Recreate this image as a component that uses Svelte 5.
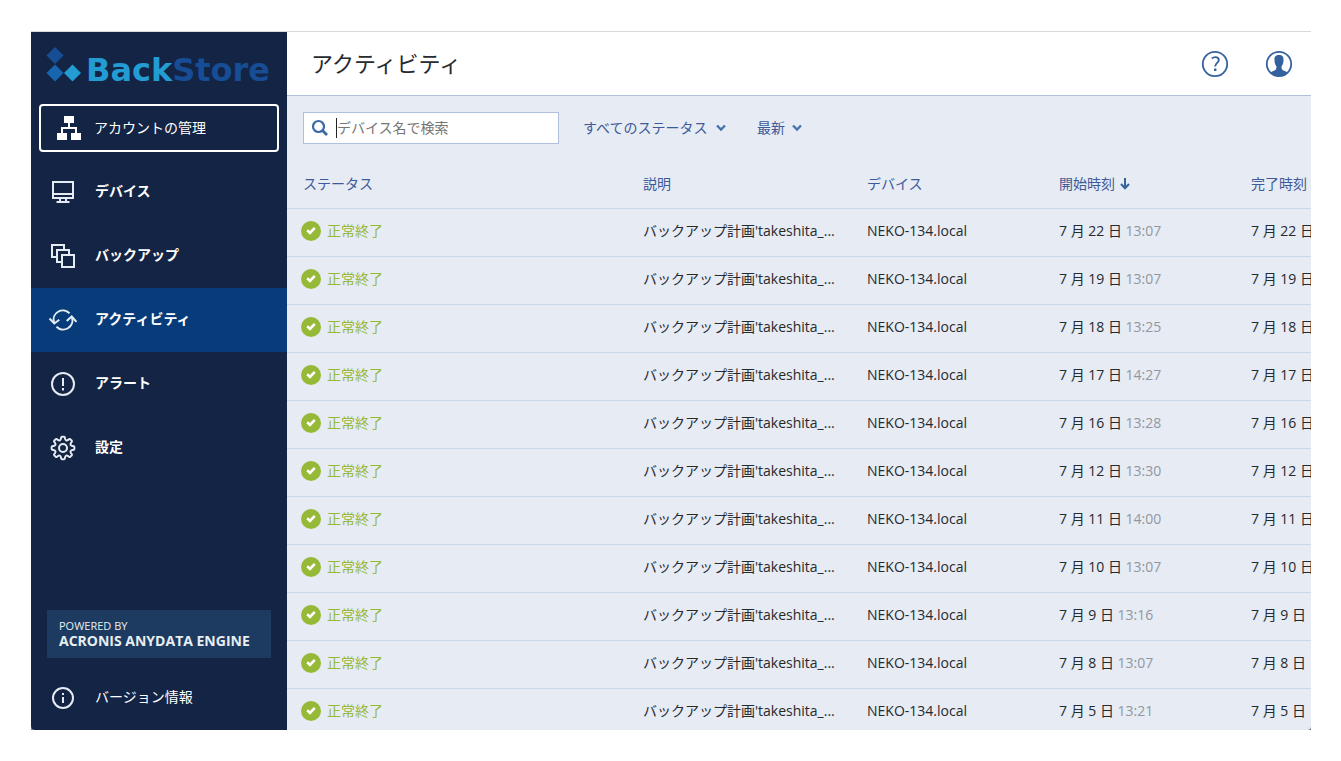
<script>
  const nav = [
    { id: 'devices', label: 'デバイス' },
    { id: 'backups', label: 'バックアップ' },
    { id: 'activity', label: 'アクティビティ', active: true },
    { id: 'alerts', label: 'アラート' },
    { id: 'settings', label: '設定' },
  ];

  const rows = [
    ['7 月 22 日', '13:07'],
    ['7 月 19 日', '13:07'],
    ['7 月 18 日', '13:25'],
    ['7 月 17 日', '14:27'],
    ['7 月 16 日', '13:28'],
    ['7 月 12 日', '13:30'],
    ['7 月 11 日', '14:00'],
    ['7 月 10 日', '13:07'],
    ['7 月 9 日', '13:16'],
    ['7 月 8 日', '13:07'],
    ['7 月 5 日', '13:21'],
  ].map(([day, time]) => ({
    status: '正常終了',
    description: "バックアップ計画'takeshita_...",
    device: 'NEKO-134.local',
    day,
    time,
  }));

  // Outline of the settings gear: eight rounded teeth around the hub.
  const gear = Array.from({ length: 8 }, (_, i) => {
    const at = (deg, r) => {
      const a = ((i * 45 + deg - 90) * Math.PI) / 180;
      return `${(16 + r * Math.cos(a)).toFixed(2)} ${(16 + r * Math.sin(a)).toFixed(2)}`;
    };
    return `${i ? 'L' : 'M'}${at(-12, 9.6)} Q${at(-11, 11.4)} ${at(-6, 11.4)} L${at(6, 11.4)} Q${at(11, 11.4)} ${at(12, 9.6)} Q${at(22.5, 7)} ${at(33, 9.6)}`;
  }).join(' ') + ' Z';
</script>

{#snippet chevron()}
  <svg class="chevron" width="10" height="8" viewBox="0 0 10 8" aria-hidden="true">
    <path d="M1 1.5 5 5.5 9 1.5" fill="none" stroke="#4673ac" stroke-width="2.4" />
  </svg>
{/snippet}

<div class="page">
  <div class="frame">
    <div class="app">
      <aside class="sidebar">
        <a class="logo" href="#home">
          <svg width="36" height="36" viewBox="0 -1 36 36" aria-hidden="true">
            <path d="M9 0 17.5 8.5 9 17 .5 8.5Z" fill="#164d94" />
            <path d="M9 17.5 17.5 26 9 34.5.5 26Z" fill="#1665ae" />
            <path d="M26.500 17.5 35 26 26.500 34.5 18 26Z" fill="#239bd3" />
          </svg>
          <span class="word"><span class="back">Back</span><span class="store">Store</span></span>
        </a>

        <button class="account" type="button">
          <svg width="24" height="24" viewBox="0 0 24 24" aria-hidden="true">
            <path d="M7 0H17V7H13V11H20V17H24V24H14V17H18V13H6V17H10V24H0V17H4V11H11V7H7Z" fill="#fff" />
          </svg>
          <span>アカウントの管理</span>
        </button>

        <nav>
          {#each nav as item (item.id)}
            <a class="item" class:active={item.active} href={'#' + item.id}>
              <svg width="32" height="32" viewBox="0 0 32 32" fill="none" stroke="#e4ebf2" stroke-width="2" aria-hidden="true">
                {#if item.id === 'devices'}
                  <path d="M6 6H26V22H6ZM6 18H26" />
                  <path d="M13 22V25M19 22V25M9.500 26H22.500" />
                {:else if item.id === 'backups'}
                  <path d="M10 17H5V5H17V9" />
                  <path d="M15 22H10V10H22V14" />
                  <path d="M15 15H27V27H15Z" />
                {:else if item.id === 'activity'}
                  <path d="M22.500 9.200A9.300 9.300 0 0 0 7 18.500M9.500 22.800A9.300 9.300 0 0 0 25 13.500" />
                  <path d="M2.500 14.500 7.300 19.500 12.300 15.800M19.700 17 24.700 12.500 29.500 17.800" />
                {:else if item.id === 'alerts'}
                  <circle cx="16" cy="16" r="11" />
                  <path d="M16 10V18M16 20V22.500" />
                {:else}
                  <path d={gear} stroke-linejoin="round" />
                  <circle cx="16" cy="16" r="4" />
                {/if}
              </svg>
              <span>{item.label}</span>
            </a>
          {/each}
        </nav>

        <div class="powered">
          <span>POWERED BY</span>
          <strong>ACRONIS ANYDATA ENGINE</strong>
        </div>

        <a class="item about" href="#about">
          <svg width="32" height="32" viewBox="0 0 32 32" fill="none" stroke="#e4ebf2" stroke-width="2" aria-hidden="true">
            <circle cx="16" cy="16" r="10" />
            <path d="M16 11V13M16 15V21" />
          </svg>
          <span>バージョン情報</span>
        </a>
      </aside>

      <main>
        <header>
          <h1>アクティビティ</h1>
          <button class="round" type="button" aria-label="ヘルプ">
            <svg width="28" height="28" viewBox="0 0 28 28" fill="none" stroke="#35629f" aria-hidden="true">
              <circle cx="14" cy="14" r="12.200" stroke-width="1.800" />
              <path d="M10.800 8.400C12 7.400 13.200 7.100 14.300 7.100C16.400 7.100 17.800 8.200 17.800 10C17.800 12.800 14.200 13 14.200 16.500" stroke-width="1.900" />
              <path d="M14.200 18.600V21" stroke-width="2.400" />
            </svg>
          </button>
          <button class="round" type="button" aria-label="ユーザー">
            <svg width="28" height="28" viewBox="0 0 28 28" aria-hidden="true">
              <circle cx="14" cy="14" r="12.200" fill="none" stroke="#35629f" stroke-width="1.800" />
              <path d="M14 5C17.400 5 18.700 6.800 18.500 10C18.600 12.500 17.800 15 16.600 16.300C16.500 18.300 16.700 19.400 18 20.200L22.500 22.300C20.500 25 17.500 26.500 14 26.500S7.500 25 5.500 22.300L10 20.200C11.300 19.400 11.500 18.300 11.400 16.300C10.200 15 9.400 12.500 9.500 10C9.300 6.800 10.600 5 14 5Z" fill="#35629f" />
            </svg>
          </button>
        </header>

        <div class="tools">
          <label class="search">
            <svg width="18" height="18" viewBox="0 0 18 18" fill="none" stroke="#3d69a6" aria-hidden="true">
              <circle cx="7.500" cy="7.500" r="5.500" stroke-width="2.200" />
              <path d="M11.500 11.500 16 16" stroke-width="2.800" />
            </svg>
            <span class="caret"></span>
            <input type="text" placeholder="デバイス名で検索" aria-label="デバイス名で検索" />
          </label>
          <label class="filter">
            <select aria-label="ステータス"><option>すべてのステータス</option></select>
            {@render chevron()}
          </label>
          <label class="filter">
            <select aria-label="期間"><option>最新</option></select>
            {@render chevron()}
          </label>
        </div>

        <table>
          <colgroup>
            <col />
            <col class="wide" />
            <col class="mid" />
            <col class="mid" />
            <col class="mid" />
          </colgroup>
          <thead>
            <tr>
              <th>ステータス</th>
              <th>説明</th>
              <th>デバイス</th>
              <th aria-sort="descending">
                <button class="sort" type="button">
                  開始時刻
                  <svg width="10" height="12" viewBox="0 0 10 12" fill="none" stroke="#34629f" stroke-width="2" aria-hidden="true">
                    <path d="M5 0V10.500M1 6 5 10.300 9 6" />
                  </svg>
                </button>
              </th>
              <th>完了時刻</th>
            </tr>
          </thead>
          <tbody>
            {#each rows as row}
              <tr>
                <td>
                  <span class="status">
                    <svg width="20" height="20" viewBox="0 0 20 20" aria-hidden="true">
                      <circle cx="10" cy="10" r="10" fill="#96b938" />
                      <path d="M6.200 9.300 9 12 13.800 6.800" fill="none" stroke="#fff" stroke-width="2.600" />
                    </svg>
                    {row.status}
                  </span>
                </td>
                <td>{row.description}</td>
                <td>{row.device}</td>
                <td>{row.day} <time>{row.time}</time></td>
                <td>{row.day} <time>{row.time}</time></td>
              </tr>
            {/each}
          </tbody>
        </table>
      </main>
    </div>
  </div>
</div>

<style>
  :global(body) {
    margin: 0;
    background: #fff;
  }

  .page,
  .page * {
    box-sizing: border-box;
  }

  .page {
    display: flex;
    height: 100vh;
    padding: 31px 30px 31px 31px;
    font: 14px/20px 'Open Sans', 'Noto Sans CJK JP', sans-serif;
    color: #26292e;
  }

  .frame {
    display: flex;
    flex: 1;
    min-width: 0;
    border-top: 1px solid #d5dada;
    background: #777b80;
  }

  .app {
    display: flex;
    flex: 1;
    min-width: 0;
    overflow: hidden;
    border-radius: 0 0 4px 4px;
    background: #e6ebf4;
  }

  button,
  input,
  select {
    margin: 0;
    padding: 0;
    border: 0;
    background: none;
    font: inherit;
    color: inherit;
  }

  button,
  select {
    cursor: pointer;
  }

  a {
    color: inherit;
    text-decoration: none;
  }

  svg {
    display: block;
    flex: none;
  }

  .sidebar {
    display: flex;
    flex: none;
    flex-direction: column;
    width: 256px;
    background: #132444;
    color: #fff;
  }

  .logo {
    display: flex;
    align-items: center;
    gap: 4px;
    height: 64px;
    padding: 0 15px;
  }

  .word {
    padding-top: 12px;
    font: 700 32px/40px 'DejaVu Sans', sans-serif;
  }

  .back {
    color: #239bd3;
  }

  .store {
    color: #164d94;
  }

  .account {
    display: flex;
    align-items: center;
    gap: 13px;
    height: 48px;
    margin: 8px;
    padding: 0 16px;
    border: 2px solid #fff;
    border-radius: 4px;
  }

  .item {
    display: flex;
    align-items: center;
    gap: 16px;
    height: 64px;
    padding: 0 16px;
    font-weight: 700;
  }

  .item span {
    padding-bottom: 3px;
  }

  .item.active {
    background: #083b7a;
  }

  .item.about {
    font-weight: 400;
  }

  .powered {
    display: flex;
    flex-direction: column;
    justify-content: center;
    height: 48px;
    margin: auto 16px 8px;
    padding: 0 12px;
    background: #1d3b60;
    color: #e8edf2;
  }

  .powered span {
    font-size: 11px;
    line-height: 14px;
  }

  .powered strong {
    line-height: 16px;
    white-space: nowrap;
  }

  main {
    flex: 1;
    min-width: 0;
    overflow: hidden;
  }

  header {
    display: flex;
    align-items: center;
    gap: 36px;
    height: 64px;
    padding: 0 18px 0 24px;
    border-bottom: 1px solid #afbfd8;
    background: #fff;
  }

  h1 {
    flex: 1;
    margin: 0;
    padding-bottom: 2px;
    font-size: 22px;
    font-weight: 400;
    line-height: 32px;
  }

  .tools {
    display: flex;
    align-items: center;
    gap: 24px;
    height: 64px;
    padding: 0 16px;
    color: #3e5a98;
  }

  .search {
    display: flex;
    align-items: center;
    width: 256px;
    height: 32px;
    padding: 0 7px;
    border: 1px solid #afc0dc;
    background: #fff;
  }

  .caret {
    width: 1px;
    height: 20px;
    margin-left: 7px;
    background: #222;
  }

  .search input {
    flex: 1;
    min-width: 0;
    outline: 0;
    color: #26292e;
  }

  .search input::placeholder {
    color: #757575;
    opacity: 1;
  }

  .filter {
    display: flex;
    align-items: center;
    gap: 7px;
    margin-right: 7px;
  }

  select {
    appearance: none;
  }

  table {
    width: 100%;
    min-width: 1140px;
    table-layout: fixed;
    border-collapse: separate;
    border-spacing: 0;
  }

  .wide {
    width: 224px;
  }

  .mid {
    width: 192px;
  }

  th,
  td {
    height: 48px;
    padding: 0 16px 3px;
    border-bottom: 1px solid #c9d7e8;
    text-align: left;
    white-space: nowrap;
  }

  th {
    height: 49px;
    padding-bottom: 1px;
    font-weight: 400;
    color: #3e5a98;
  }

  .sort {
    display: flex;
    align-items: center;
    gap: 5px;
  }

  .status {
    display: flex;
    align-items: center;
    gap: 6px;
    margin-left: -2px;
    color: #96b938;
  }

  time {
    color: #92979f;
  }
</style>
